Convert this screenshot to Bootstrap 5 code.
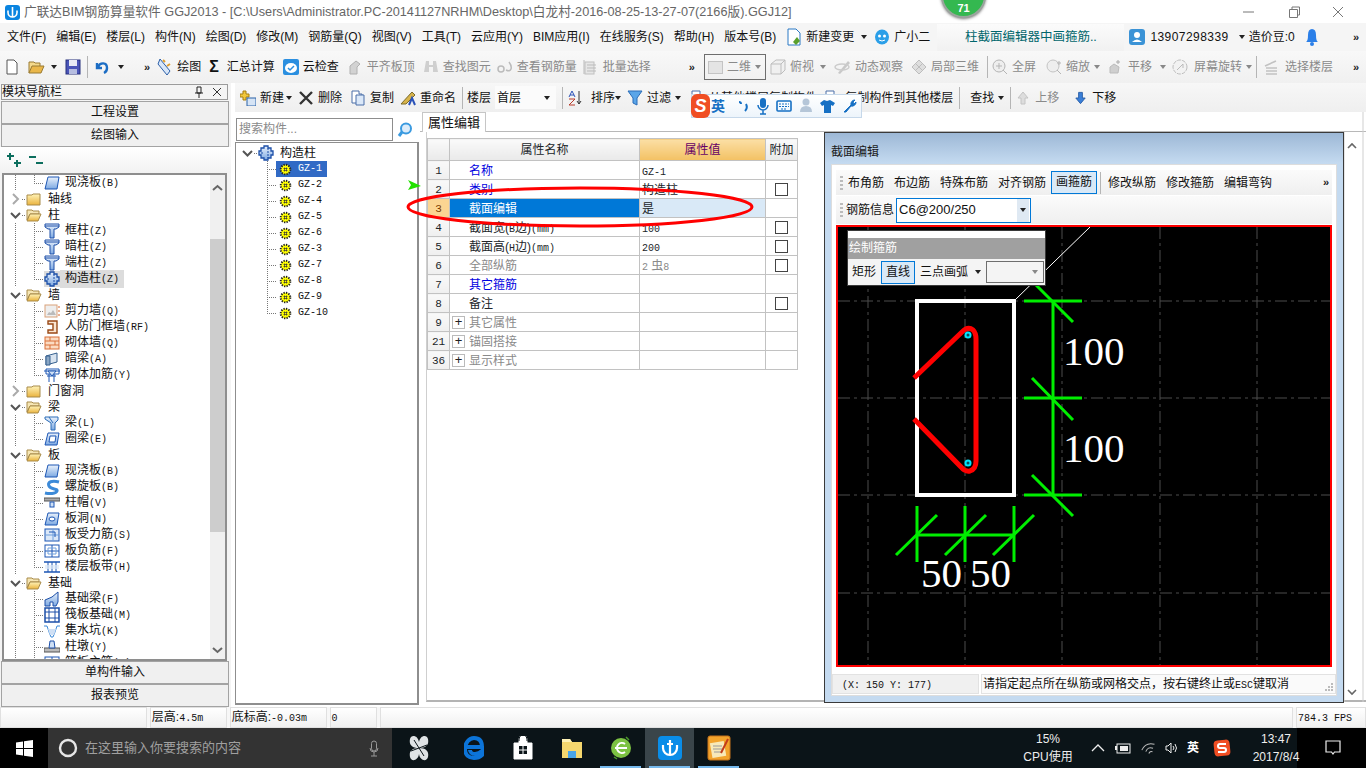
<!DOCTYPE html>
<html lang="zh-CN">
<head>
<meta charset="UTF-8">
<meta name="viewport" content="width=device-width, initial-scale=1.0">
<title>广联达BIM钢筋算量软件 GGJ2013</title>
<link href="https://cdn.jsdelivr.net/npm/bootstrap@5.3.2/dist/css/bootstrap.min.css" rel="stylesheet">
<style>
body{width:1366px;height:768px;overflow:hidden;background:#fff;color:#111;font:12px/16px "Liberation Sans","Noto Sans CJK SC",sans-serif}
svg{display:block;flex:none}
.app{width:1366px;height:768px}
.m{font:10px/16px "Liberation Mono","Noto Sans CJK SC",monospace}
.g2{margin-left:2px}.g6{margin-left:6px}.g7{margin-left:7px}.g10{margin-left:10px}.g14{margin-left:14px}.g20{margin-left:20px}.g38{margin-left:38px}
.gm2{margin-left:-2px}.gm3{margin-left:-3px}.gm5{margin-left:-5px}.gm6{margin-left:-6px}
/* title and menu */
.titlebar{height:23px;color:#666;padding-left:5px;font-size:12.7px}
.winbtns{margin-left:auto;gap:29px;padding-right:19px}
.menubar{height:28px;background:#f5f5f5;padding-left:7px;gap:10px;white-space:nowrap}
.helptab{width:187px;height:27px;background:linear-gradient(#fbfbfb,#f1f1f1);color:#00666c;justify-content:center;font-size:12.5px}
.phone{letter-spacing:.45px}
.chev2{font:bold 11px/11px "Liberation Sans",sans-serif;letter-spacing:-1px;color:#222}
/* toolbars */
.tools{height:32px;background:linear-gradient(#f8f8f8,#f0f0f0);padding-left:4px;white-space:nowrap}
.tools3{height:29px;background:linear-gradient(#f7f7f7,#efefef);padding-left:5px;white-space:nowrap}
.ti{display:flex;align-items:center;gap:4px}
.off{color:#8a8a8a}
.sep{width:1px;height:22px;background:#b5b5b5}
.caret{width:0;height:0;border:3px solid transparent;border-top:4px solid #222;border-bottom:0}
.caret.dim{border-top-color:#888}
.combo2d{width:62px;height:26px;border:1px solid #6e6e6e;padding-left:3px;margin-left:10px;color:#8a8a8a}
.combo2d i{width:15px;height:13px;background:#e4e4e4;border:1px solid #c4c4c4}
.floorsel{width:61px;height:23px;background:#fbfbfb;padding:0 2px}
/* left panel */
.nav-pane{width:231px;background:#f4f4f4}
.panehead{height:16px;margin:1px 3px 1px 1px;border:1px solid #9b9b9b;line-height:14px;padding-right:5px}
.navbtn{height:23px;width:228px;margin-left:1px;padding:0;border:1px solid #a3a3a3;border-radius:0;background:#f0f0f0;font-size:12px;line-height:21px;color:#111}
.expbar{height:26px;padding-left:6px;gap:6px;background:linear-gradient(#fff,#f2f2f2)}
.treebox{height:488px;width:225px;margin-left:2px;border:2px solid #8e8e8e;background:#fff;overflow:hidden}
.treeflow{width:206px}
.scrolltrack{width:15px;background:#f0f0f0}
.scrollthumb{height:293px;margin-top:64px;background:#cdcdcd}
.tr{height:16px;display:flex;align-items:center;white-space:nowrap}
.tw{width:13px;padding-right:4px;box-sizing:content-box;margin-left:5px;background:repeating-linear-gradient(to right,#777 0 1px,transparent 1px 2px) right 50%/4px 1px no-repeat}
.tg{width:4px;height:16px;background:repeating-linear-gradient(to right,#777 0 1px,transparent 1px 2px) 0 50%/100% 1px no-repeat}
.tl{width:10px;height:16px;margin-left:18px;background:repeating-linear-gradient(to bottom,#777 0 1px,transparent 1px 2px) 0 0/1px 100% no-repeat,repeating-linear-gradient(to right,#777 0 1px,transparent 1px 2px) 0 50%/100% 1px no-repeat}
.tl.end{background:repeating-linear-gradient(to bottom,#777 0 1px,transparent 1px 2px) 0 0/1px 50% no-repeat,repeating-linear-gradient(to right,#777 0 1px,transparent 1px 2px) 0 50%/100% 1px no-repeat}
.tv{width:1px;height:16px;margin-left:11px;background:repeating-linear-gradient(to bottom,#777 0 1px,transparent 1px 2px)}
.tlab{padding:0 3px;margin-left:2px}
.tbg{background:#dcdcdc}
.tlab-on{background:#dcdcdc;margin-left:0;padding-left:5px;padding-right:5px}
.tlab-g{margin-left:6px}
/* component tree */
.comp-col{width:184px}
.searchrow{height:30px;padding:6px 0 0 1px}
.searchbox{width:157px;height:23px;border:1px solid #8d8d8d;color:#8a8a8a;padding-left:2px;line-height:20px;font-size:12px}
.comptree{height:563px;border:1px solid #8e8e8e;border-width:1px 2px 2px 1px;background:#fff;padding:2px 0 0 5px}
.gzrow{height:16px;display:flex;align-items:center}
.gzline{width:9px;height:16px;margin-left:26px;background:repeating-linear-gradient(to bottom,#777 0 1px,transparent 1px 2px) 0 0/1px 100% no-repeat,repeating-linear-gradient(to right,#777 0 1px,transparent 1px 2px) 0 50%/100% 1px no-repeat}
.gzline.end{background:repeating-linear-gradient(to bottom,#777 0 1px,transparent 1px 2px) 0 0/1px 50% no-repeat,repeating-linear-gradient(to right,#777 0 1px,transparent 1px 2px) 0 50%/100% 1px no-repeat}
.gzitem{width:auto;display:flex;align-items:center;gap:6px;padding:0 4px 0 3px;height:16px}
.gzon{background:#316ac5;color:#fff;width:51px}
/* property pane */
.prop-pane{height:590px;margin-left:1px}
.tabstrip{height:20px;padding-left:2px;border-bottom:1px solid #b8b8b8}
.proptab{width:64px;height:20px;background:#fff;border:1px solid #c6c6c6;border-bottom:0;text-align:center;line-height:19px;font-size:13px}
.propbody{padding:6px 0 0 0;border-left:1px solid #cfcfcf;margin-left:6px;height:570px;border-bottom:2px solid #b4b4b4}
.ptable{width:371px;table-layout:fixed;border-collapse:collapse;margin:0;font-size:12px;--bs-table-border-color:#c2c2c2}
.ptable td,.ptable th{height:19px;padding:0;line-height:16px;font-weight:400;border:1px solid #c2c2c2;white-space:nowrap;overflow:hidden;vertical-align:middle}
.ptable td{padding-top:1px}
.ptable .m{line-height:10px}
.ptable th{height:22px;text-align:center;background:linear-gradient(#fafafa,#e9e9e9)}
.ptable th.valh{background:linear-gradient(#fbdfa5,#f3c163);color:#660066}
.c1{width:22px}.c2{width:190px}.c3{width:126px}.c4{width:32px}
.idx{text-align:center;background:linear-gradient(#f9f9f9,#efefef);font-family:"Liberation Mono",monospace;font-size:11px}
.lab{padding-left:19px!important}
.val{padding-left:2px!important}
.blue{color:#0000e0}
.gray{color:#8a8a8a}
.rowsel .idx{background:#fbd592;color:#7a3b00}
.rowsel .lab{background:#0078d7;color:#fff}
.rowsel .val{background:#d9e9f7}
.chk{width:13px;height:13px;border:1px solid #444;margin:0 auto;background:#fff}
.plus{width:13px;height:13px;border:1px solid #bbb;margin:0 4px 0 2px;line-height:10px;text-align:center;color:#222;font-size:13px}
.pluscell{display:flex;align-items:center;color:#8a8a8a}
/* section dialog */
.dlg{position:absolute;left:824px;top:132px;width:520px;height:571px;border:1px solid #3a3a3a;background:linear-gradient(#9db8d6,#c4daf0 30px,#c4daf0);padding:0 6px 6px}
.dlgtitle{height:31px;padding-top:11px;color:#1a1a1a}
.dlginner{height:532px;background:#fff;border:1px solid #ddd;padding:5px 4px 0 4px}
.dtool{height:25px;background:linear-gradient(#fbfbfb,#efefef);gap:10px;padding-left:1px;white-space:nowrap}
.grip{width:3px;height:14px;margin-left:3px;background:repeating-linear-gradient(to bottom,#bbb 0 2px,transparent 2px 4px)}
.dtool-on{height:23px;width:46px;border:1px solid #0078d7;background:#d9e9f7;text-align:center;line-height:21px;margin:0 -5px}
.dtool2{height:28px;background:linear-gradient(#fbfbfb,#efefef);margin-top:1px;padding-left:1px;gap:1px}
.rebcombo{width:135px;height:25px;border:1px solid #0078d7;background:#fff;padding-left:2px;font-size:13px;margin-left:1px}
.rebcombo b{width:12px;height:23px;margin-left:auto;background:#dfe9f3;margin-right:1px;display:flex;align-items:center;justify-content:center}
.canvasbox{position:relative;width:496px;height:442px;margin-top:1px;border:2px solid #f00;background:#000;overflow:hidden}
.floatbar{position:absolute;left:9px;top:3px;width:199px;height:56px;border:1px solid #3a3a3a;background:#f4f4f4}
.floatbar .ttl{height:7px;background:#fff}
.floatbar .hd{height:21px;background:#a0a0a0;color:#fff;line-height:20px;padding-left:1px}
.fltools{height:26px;padding-left:4px;white-space:nowrap}
.line-on{width:34px;height:23px;border:1px solid #0078d7;background:#d9e9f7;text-align:center;line-height:21px;margin:0 5px}
.flcombo{width:58px;height:22px;flex:none;border:1px solid #6e6e6e;margin-left:5px;padding-right:5px;justify-content:flex-end}
.dlgstatus{height:20px;margin:7px -4px 0 -4px;gap:2px;position:relative}
.stcell{background:#f0f0f0;border:1px solid #e2e2e2;height:20px;line-height:18px}
.stpos{width:147px;padding-left:9px}
.stmsg{width:355px;padding-left:1px;background:#fafafa}
.sizegrip{position:absolute;right:2px;bottom:2px}
/* status and taskbar */
.statusbar{height:21px;background:#f7f7f7;gap:3px}
.stc{height:21px;border:1px solid #e0e0e0;background:linear-gradient(#fff,#f0f0f0);line-height:19px;padding-left:1px}
.s1{width:147px}.s2{width:77px}.s3{width:97px}.s4{width:48px}.s5{width:914px}.s6{width:70px}
.taskbar{height:40px;background:#0b1418;color:#fff}
.startbtn{width:48px;height:40px;background:#000;justify-content:center}
.tasksearch{width:344px;height:40px;background:#333;padding-left:10px;color:#a0a0a0;gap:7px;font-size:13px}
.tasksearch svg:last-child{margin-left:auto;margin-right:13px}
.tapp{width:49px;height:40px;justify-content:center;position:relative}
.tapp-on{background:#3a454a}
.tapp-run::after{content:"";position:absolute;left:4px;right:4px;bottom:0;height:2px;background:#76b9ed}
.tray{margin-left:auto;font-size:12px}
.cpu{width:70px;text-align:center;line-height:18px;color:#eee}
.clock{width:52px;text-align:center;line-height:18px;color:#eee;margin:0 -5px 0 19px;white-space:nowrap;position:relative;z-index:1}
.notif{width:69px;height:40px;padding-left:3px;justify-content:center;background:#000}
/* overlays */
.badge71{position:absolute;left:941px;top:-27px;width:45px;height:45px;border-radius:50%;background:#34b850;border:2px solid #9aa49d;box-shadow:0 1px 3px #777;color:#fff;font-weight:700;font-size:11px;text-align:center;padding-top:26px;line-height:14px}
.imebar{position:absolute;left:691px;top:94px;width:171px;height:24px;background:linear-gradient(#fff,#edf4fb);border:1px solid #c6d8ea;gap:7px}
.imebar .yi{color:#1670c4;font-weight:700;font-size:14px;margin:0 6px 0 -6px}
.sgbadge{width:19px;height:24px;margin-left:-1px;background:#f04e23;border-radius:6px;color:#fff;font:italic 700 18px/24px "Liberation Sans",sans-serif;text-align:center}
.ellipse{position:absolute;left:404px;top:178px}
</style>
</head>
<body>
<svg width="0" height="0" class="position-absolute">
<defs>
<linearGradient id="bl" x1="0" y1="0" x2="0" y2="1"><stop offset="0" stop-color="#eaf2fc"/><stop offset="1" stop-color="#7da9e2"/></linearGradient>
<linearGradient id="yl" x1="0" y1="0" x2="0" y2="1"><stop offset="0" stop-color="#fff3b8"/><stop offset="1" stop-color="#eab33e"/></linearGradient>
<symbol id="slab" viewBox="0 0 16 16"><path d="M4 2h11l-2 12H1z" fill="url(#bl)" stroke="#1c56b4"/></symbol>
<symbol id="col" viewBox="0 0 16 16"><path d="M1 1h14v3l-3 2h-2v9H6V6H4L1 4z" fill="url(#bl)" stroke="#1c4fa8"/><path d="M1 3h14" stroke="#1c4fa8"/></symbol>
<symbol id="puz" viewBox="0 0 16 16"><path d="M6 1h4v2h3v3h2v4h-2v3h-3v2H6v-2H3v-3H1V6h2V3h3z" fill="url(#bl)" stroke="#1c4fa8" stroke-width="1.300"/><path d="M10 3v10M3 8h3" stroke="#1c4fa8" stroke-dasharray="2 1"/></symbol>
<symbol id="fc" viewBox="0 0 16 16"><path d="M1 4h5l1-1h7v11H1z" fill="url(#yl)" stroke="#a88b4a"/></symbol>
<symbol id="fo" viewBox="0 0 16 16"><path d="M1 3h5l1 1h6v3H4L1 13z" fill="#f6e6b4" stroke="#a88b4a"/><path d="M4 7h11l-3 7H1z" fill="url(#yl)" stroke="#a88b4a"/></symbol>
<symbol id="shear" viewBox="0 0 16 16"><rect x="1" y="2" width="12" height="12" fill="#eee" stroke="#d9a27a"/><path d="M3 12l2-3 2 1 2-3 3 5z" fill="#bbb"/><path d="M14 4h2M14 8h2M14 12h2" stroke="#d5622a"/></symbol>
<symbol id="rf" viewBox="0 0 16 16"><path d="M4 2h9v12H4v-3h5V5H4z" fill="#fbe7d3" stroke="#9a4a18" stroke-width="1.400"/></symbol>
<symbol id="brick" viewBox="0 0 16 16"><rect x="1" y="2" width="14" height="12" fill="#fbdcc3" stroke="#d9713a"/><path d="M1 6h14M1 10h14M6 2v4M11 6v4M6 10v4" stroke="#d9713a"/></symbol>
<symbol id="abeam" viewBox="0 0 16 16"><path d="M2 5l11-3v9L2 14z" fill="#d9e4f0" stroke="#36608f"/><path d="M2 5h4v9H2z" fill="#8aa6c4" stroke="#36608f"/></symbol>
<symbol id="mas" viewBox="0 0 16 16"><path d="M2 2h13v5H2zM5 7v8M10 7v8M0 4h16M3 9h9" fill="none" stroke="#1c56b4"/><path d="M4 4h8l-4 5z" fill="#cfe0f5" stroke="#1c56b4"/></symbol>
<symbol id="beam" viewBox="0 0 16 16"><path d="M1 2h13v3l-3 3v7H7V8L1 4z" fill="url(#bl)" stroke="#2b6cb8"/><path d="M5 2l4 6" stroke="#2b6cb8"/></symbol>
<symbol id="ring" viewBox="0 0 16 16"><path d="M4 2h11l-2 12H1z" fill="url(#bl)" stroke="#1c56b4"/><path d="M6 5h6l-1 6H5z" fill="#fff" stroke="#1c56b4"/></symbol>
<symbol id="spiral" viewBox="0 0 16 16"><path d="M15 3C8 1 3 3 5 7s9 2 8 5-8 3-12 2" fill="none" stroke="#3c8ad8" stroke-width="3"/></symbol>
<symbol id="cap" viewBox="0 0 16 16"><rect x="0" y="3" width="16" height="3" fill="#aaa" stroke="#555"/><rect x="6" y="7" width="4" height="5" fill="#cfe0f5" stroke="#1c56b4"/></symbol>
<symbol id="hole" viewBox="0 0 16 16"><path d="M4 2h11l-2 12H1z" fill="url(#bl)" stroke="#1c56b4"/><ellipse cx="8" cy="8" rx="3" ry="2" fill="#fff" stroke="#1c56b4"/></symbol>
<symbol id="rbar" viewBox="0 0 16 16"><rect x="1" y="2" width="14" height="12" fill="#dbe8f8" stroke="#1c56b4"/><path d="M1 8h14M9 2v12" stroke="#6f9fdc"/><path d="M5 5h6v5" fill="none" stroke="#1c56b4"/></symbol>
<symbol id="nbar" viewBox="0 0 16 16"><rect x="1" y="2" width="14" height="12" fill="#fff" stroke="#1c56b4"/><path d="M1 8h14M8 2v12" stroke="#1c56b4"/><path d="M4 5h8v6H4z" fill="none" stroke="#6f9fdc"/></symbol>
<symbol id="strip" viewBox="0 0 16 16"><path d="M0 3h16M0 13h16" stroke="#1c56b4" stroke-width="1.500"/><path d="M4 3v10M8 3v10M12 3v10" stroke="#1c56b4"/><rect x="1" y="6" width="14" height="4" fill="#dbe8f8" opacity=".7"/></symbol>
<symbol id="fbeam" viewBox="0 0 16 16"><path d="M1 15V9l7-3 6-5v10l-2 4H9v-4H6v4z" fill="url(#bl)" stroke="#1c4fa8"/></symbol>
<symbol id="raft" viewBox="0 0 16 16"><rect x="1" y="1" width="14" height="14" fill="#fff" stroke="#1c4fa8" stroke-width="1.500"/><path d="M5 1v14M11 1v14M1 5h14M1 11h14" stroke="#1c4fa8"/></symbol>
<symbol id="pit" viewBox="0 0 16 16"><path d="M0 3h3l2 6h6l2-6h3M5 9l2 5h2l2-5" fill="none" stroke="#3c8ad8"/><path d="M4 6h8l-2 6H6z" fill="#cfe0f5"/></symbol>
<symbol id="pier" viewBox="0 0 16 16"><rect x="0" y="9" width="16" height="4" fill="#bbb" stroke="#555"/><path d="M6 2h4l1 7H5z" fill="#cfe0f5" stroke="#1c4fa8"/></symbol>
<symbol id="gear" viewBox="0 0 13 13"><circle cx="6.500" cy="6.500" r="4.800" fill="#ff0" stroke="#222" stroke-width="2" stroke-dasharray="1.300 1.200"/><path d="M4.500 5.500h4M4.500 7.500h4M5.500 4.500v4M7.500 4.500v4" stroke="#333" stroke-width=".7"/></symbol>
<symbol id="down" viewBox="0 0 13 16"><path d="M2 6l4.500 4.500L11 6" fill="none" stroke="#555" stroke-width="2"/></symbol>
<symbol id="right" viewBox="0 0 13 16"><path d="M4 3l5 5-5 5" fill="none" stroke="#aaa" stroke-width="2"/></symbol>
</defs>
</svg>

<div class="app position-relative d-flex flex-column">
  <!-- 标题栏 -->
  <div class="titlebar d-flex align-items-center">
    <svg width="15" height="16" viewBox="0 0 15 16"><rect x="0" y="1" width="15" height="15" rx="3" fill="#0a84e0"/><path d="M7.500 3v10M3 6.500v2a3 3 0 0 0 9 0v-2" fill="none" stroke="#fff" stroke-width="1.600"/></svg>
    <span class="ms-1">广联达BIM钢筋算量软件 GGJ2013 - [C:\Users\Administrator.PC-20141127NRHM\Desktop\白龙村-2016-08-25-13-27-07(2166版).GGJ12]</span>
    <div class="winbtns d-flex align-items-center">
      <svg width="16" height="12" viewBox="0 0 16 12"><path d="M2 6h11" stroke="#777"/></svg>
      <svg width="16" height="12" viewBox="0 0 16 12"><path d="M3.500 3.500h8v8h-8zM6 3V1h7.500v8H12" fill="none" stroke="#777"/></svg>
      <svg width="16" height="12" viewBox="0 0 16 12"><path d="M2 1l10 10M12 1L2 11" stroke="#777"/></svg>
    </div>
  </div>
  <!-- 菜单栏 -->
  <div class="menubar d-flex align-items-center">
    <span>文件(F)</span><span>编辑(E)</span><span>楼层(L)</span><span>构件(N)</span><span>绘图(D)</span><span>修改(M)</span><span>钢筋量(Q)</span><span>视图(V)</span><span>工具(T)</span><span>云应用(Y)</span><span>BIM应用(I)</span><span>在线服务(S)</span><span>帮助(H)</span><span>版本号(B)</span>
    <span class="ti"><svg width="16" height="18" viewBox="0 0 16 18"><path d="M2 1h8l4 4v12H2z" fill="#fff" stroke="#2b78c4"/><path d="M7 14l4-5 3 4-4 4z" fill="#5aa02c"/></svg>新建变更</span><span class="caret gm3"></span>
    <span class="ti gm3"><svg width="16" height="16" viewBox="0 0 16 16"><ellipse cx="8" cy="8" rx="7" ry="7.500" fill="#2b9fe8"/><circle cx="5.500" cy="7" r="1.500" fill="#fff"/><circle cx="10.500" cy="7" r="1.500" fill="#fff"/><path d="M5 11q3 2 6 0" stroke="#fff" fill="none"/></svg>广小二</span>
    <div class="helptab d-flex align-items-center gm3">柱截面编辑器中画箍筋..</div>
    <span class="ti gm6"><svg width="18" height="18" viewBox="0 0 18 18"><rect x="1" y="1" width="16" height="16" rx="3" fill="#3b93d6"/><circle cx="9" cy="7" r="3" fill="#fff"/><path d="M4 14q5-5 10 0z" fill="#fff"/></svg><span class="phone">13907298339</span></span><span class="caret"></span>
    <span class="gm6">造价豆:0</span>
    <svg width="14" height="18" viewBox="0 0 14 18"><path d="M7 1q4 0 4 6t2 7H1q2-1 2-7t4-6z" fill="#2b7fe8"/><circle cx="7" cy="16" r="2" fill="#2b7fe8"/></svg>
    <span class="chev2 ms-auto pe-2">»</span>
  </div>
  <!-- 工具栏 -->
  <div class="tools d-flex align-items-center">
    <svg width="16" height="16" viewBox="0 0 16 16"><path d="M3 1h7l3 3v11H3z" fill="#fff" stroke="#555"/></svg>
    <svg class="ms-2" width="17" height="16" viewBox="0 0 17 16"><path d="M1 14V3h5l1 1h5v3" fill="#f4d98c" stroke="#997a33"/><path d="M1 14l3-7h12l-3 7z" fill="#eab74a" stroke="#997a33"/></svg>
    <span class="caret g6"></span>
    <svg class="ms-2" width="16" height="16" viewBox="0 0 16 16"><rect x="1" y="1" width="14" height="14" fill="#4a55b8" stroke="#26307c"/><rect x="4" y="1" width="8" height="6" fill="#e8ebf5"/><rect x="4" y="10" width="8" height="5" fill="#b6bde0"/></svg>
    <span class="sep g6"></span>
    <svg class="g6" width="16" height="16" viewBox="0 0 16 16"><path d="M3 4v5h5M4 8c2-5 9-5 9 1 0 2-1 4-3 5" fill="none" stroke="#1c6dc4" stroke-width="2.400"/></svg>
    <span class="caret ms-2"></span>
    <span class="chev2 g20">»</span>
    <span class="ti ms-2"><svg width="16" height="18" viewBox="0 0 16 18"><path d="M3 1l10 12-3 4L1 6z" fill="#d8e6f8" stroke="#2b5fa8"/><path d="M6 2l2 2M10 8l3-2" stroke="#e0a030" stroke-width="2"/></svg>绘图</span>
    <span class="ti ms-1"><span class="fw-bold text-center fs-6 px-1">Σ</span><span>汇总计算</span></span>
    <span class="ti ms-2"><svg width="16" height="16" viewBox="0 0 16 16"><rect width="16" height="16" rx="2" fill="#2b8fe0"/><ellipse cx="8" cy="9" rx="6" ry="5" fill="#fff"/><path d="M5 9l2 2 4-4" stroke="#2b8fe0" fill="none" stroke-width="1.500"/></svg>云检查</span>
    <span class="ti off ms-2"><svg width="16" height="16" viewBox="0 0 16 16"><path d="M3 15V7l6-5 4 3-3 3v7z" fill="#d2d2d2" stroke="#b0b0b0"/></svg>平齐板顶</span>
    <span class="ti off ms-2"><svg width="16" height="16" viewBox="0 0 16 16"><path d="M3 2h3v4h4V2h3l2 11h-5V8H6v5H1z" fill="#cfcfcf"/></svg>查找图元</span>
    <span class="ti off g6"><svg width="16" height="16" viewBox="0 0 16 16"><circle cx="4" cy="10" r="3" fill="none" stroke="#bbb" stroke-width="1.500"/><path d="M9 11q4 2 5-1t-2-7" fill="none" stroke="#bbb" stroke-width="1.500"/></svg><span>查看钢筋量</span></span>
    <span class="ti off g6"><svg width="16" height="16" viewBox="0 0 16 16"><rect x="2" y="3" width="9" height="12" fill="#e6e6e6" stroke="#c0c0c0"/><path d="M4 6h9M4 9h9M4 12h9M1 1v14" stroke="#bbb"/></svg><span>批量选择</span></span>
    <span class="chev2 g38">»</span>
    <div class="combo2d d-flex align-items-center gap-1"><i></i>二维<span class="caret dim ms-auto me-1"></span></div>
    <span class="ti off ms-1"><svg width="16" height="16" viewBox="0 0 16 16"><path d="M1 5l5-4h9v10l-4 4H1zM1 5h10v10M11 5l4-4" fill="#f0f0f0" stroke="#bdbdbd"/></svg>俯视</span><span class="caret dim g6"></span>
    <span class="ti off ms-2"><svg width="17" height="16" viewBox="0 0 17 16"><path d="M4 14L14 2l2 2L6 15z" fill="#c8c8c8"/><ellipse cx="8" cy="8" rx="7" ry="3" fill="none" stroke="#ccc" stroke-width="1.500"/></svg>动态观察</span>
    <span class="ti off ms-2"><svg width="16" height="16" viewBox="0 0 16 16"><path d="M8 1l7 7-7 7-7-7z" fill="#dedede" stroke="#bdbdbd"/><path d="M4 4l8 8M12 4l-8 8" stroke="#bdbdbd"/></svg>局部三维</span>
    <span class="sep ms-2"></span>
    <span class="ti off ms-1"><svg width="16" height="16" viewBox="0 0 16 16"><circle cx="7" cy="7" r="6" fill="#eee" stroke="#b5b5b5"/><path d="M4 7h6M7 4v6M11 11l4 4" stroke="#b5b5b5"/></svg>全屏</span>
    <span class="ti off g10"><svg width="16" height="16" viewBox="0 0 16 16"><circle cx="7" cy="7" r="6" fill="#eee" stroke="#c4c4c4"/><path d="M11 11l4 4M13 2v4M11 4h4" stroke="#b5b5b5"/></svg>缩放</span><span class="caret dim ms-1"></span>
    <span class="ti off g6"><svg width="16" height="16" viewBox="0 0 16 16"><path d="M4 14V8l4-3 5 3-1 6z" fill="#cfcfcf" stroke="#bbb"/><path d="M12 1v4M10 3h4" stroke="#aaa"/></svg><span class="g2">平移</span></span><span class="caret dim ms-2"></span>
    <span class="ti off g6"><svg width="16" height="16" viewBox="0 0 16 16"><circle cx="8" cy="8" r="7" fill="#f2f2f2" stroke="#bdbdbd" stroke-dasharray="4 1"/><path d="M5 11l6-6v4" fill="none" stroke="#bbb"/></svg><span class="g2">屏幕旋转</span></span><span class="caret dim ms-1"></span>
    <span class="sep ms-1"></span>
    <span class="ti off g6"><svg width="16" height="16" viewBox="0 0 16 16"><path d="M2 7l11-5M3 9h11M3 12h11M3 15h11" stroke="#c2c2c2" stroke-width="1.600"/></svg><span class="g2">选择楼层</span></span>
    <span class="chev2 ms-auto pe-2">»</span>
  </div>

  <div class="d-flex">
    <!-- 模块导航栏 -->
    <div class="nav-pane flex-none">
      <div class="panehead d-flex align-items-center">模块导航栏
        <svg class="ms-auto" width="10" height="12" viewBox="0 0 10 12"><path d="M3 1h4v6H3zM1 7h8M5 7v5" fill="none" stroke="#222"/></svg>
        <svg class="ms-2" width="10" height="10" viewBox="0 0 10 10"><path d="M1 1l8 8M9 1L1 9" stroke="#333"/></svg>
      </div>
      <button class="btn navbtn d-block">工程设置</button>
      <button class="btn navbtn d-block">绘图输入</button>
      <div class="expbar d-flex align-items-center">
        <svg width="16" height="16" viewBox="0 0 16 16"><path d="M4 1v7M1 4h7M11 8v7M8 11h7" stroke="#0c6e5e" stroke-width="2"/></svg>
        <svg width="16" height="16" viewBox="0 0 16 16"><path d="M1 5h7M8 11h7" stroke="#0c6e5e" stroke-width="2"/></svg>
      </div>
      <div class="treebox d-flex">
        <div class="treeflow">
          <div class="tr"><span class="tv"></span><span class="tl end"></span><svg width="16" height="16"><use href="#slab"/></svg><span class="tlab">现浇板<span class="m">(B)</span></span></div>
          <div class="tr"><svg class="tw" width="13" height="16"><use href="#right"/></svg><svg width="16" height="16"><use href="#fc"/></svg><span class="tlab-g">轴线</span></div>
          <div class="tr"><svg class="tw" width="13" height="16"><use href="#down"/></svg><svg width="16" height="16"><use href="#fo"/></svg><span class="tlab-g">柱</span></div>
          <div class="tr"><span class="tv"></span><span class="tl"></span><svg width="16" height="16"><use href="#col"/></svg><span class="tlab">框柱<span class="m">(Z)</span></span></div>
          <div class="tr"><span class="tv"></span><span class="tl"></span><svg width="16" height="16"><use href="#col"/></svg><span class="tlab">暗柱<span class="m">(Z)</span></span></div>
          <div class="tr"><span class="tv"></span><span class="tl"></span><svg width="16" height="16"><use href="#col"/></svg><span class="tlab">端柱<span class="m">(Z)</span></span></div>
          <div class="tr"><span class="tv"></span><span class="tl end"></span><svg class="tbg" width="16" height="16"><use href="#puz"/></svg><span class="tlab tlab-on">构造柱<span class="m">(Z)</span></span></div>
          <div class="tr"><svg class="tw" width="13" height="16"><use href="#down"/></svg><svg width="16" height="16"><use href="#fo"/></svg><span class="tlab-g">墙</span></div>
          <div class="tr"><span class="tv"></span><span class="tl"></span><svg width="16" height="16"><use href="#shear"/></svg><span class="tlab">剪力墙<span class="m">(Q)</span></span></div>
          <div class="tr"><span class="tv"></span><span class="tl"></span><svg width="16" height="16"><use href="#rf"/></svg><span class="tlab">人防门框墙<span class="m">(RF)</span></span></div>
          <div class="tr"><span class="tv"></span><span class="tl"></span><svg width="16" height="16"><use href="#brick"/></svg><span class="tlab">砌体墙<span class="m">(Q)</span></span></div>
          <div class="tr"><span class="tv"></span><span class="tl"></span><svg width="16" height="16"><use href="#abeam"/></svg><span class="tlab">暗梁<span class="m">(A)</span></span></div>
          <div class="tr"><span class="tv"></span><span class="tl end"></span><svg width="16" height="16"><use href="#mas"/></svg><span class="tlab">砌体加筋<span class="m">(Y)</span></span></div>
          <div class="tr"><svg class="tw" width="13" height="16"><use href="#right"/></svg><svg width="16" height="16"><use href="#fc"/></svg><span class="tlab-g">门窗洞</span></div>
          <div class="tr"><svg class="tw" width="13" height="16"><use href="#down"/></svg><svg width="16" height="16"><use href="#fo"/></svg><span class="tlab-g">梁</span></div>
          <div class="tr"><span class="tv"></span><span class="tl"></span><svg width="16" height="16"><use href="#beam"/></svg><span class="tlab">梁<span class="m">(L)</span></span></div>
          <div class="tr"><span class="tv"></span><span class="tl end"></span><svg width="16" height="16"><use href="#ring"/></svg><span class="tlab">圈梁<span class="m">(E)</span></span></div>
          <div class="tr"><svg class="tw" width="13" height="16"><use href="#down"/></svg><svg width="16" height="16"><use href="#fo"/></svg><span class="tlab-g">板</span></div>
          <div class="tr"><span class="tv"></span><span class="tl"></span><svg width="16" height="16"><use href="#slab"/></svg><span class="tlab">现浇板<span class="m">(B)</span></span></div>
          <div class="tr"><span class="tv"></span><span class="tl"></span><svg width="16" height="16"><use href="#spiral"/></svg><span class="tlab">螺旋板<span class="m">(B)</span></span></div>
          <div class="tr"><span class="tv"></span><span class="tl"></span><svg width="16" height="16"><use href="#cap"/></svg><span class="tlab">柱帽<span class="m">(V)</span></span></div>
          <div class="tr"><span class="tv"></span><span class="tl"></span><svg width="16" height="16"><use href="#hole"/></svg><span class="tlab">板洞<span class="m">(N)</span></span></div>
          <div class="tr"><span class="tv"></span><span class="tl"></span><svg width="16" height="16"><use href="#rbar"/></svg><span class="tlab">板受力筋<span class="m">(S)</span></span></div>
          <div class="tr"><span class="tv"></span><span class="tl"></span><svg width="16" height="16"><use href="#nbar"/></svg><span class="tlab">板负筋<span class="m">(F)</span></span></div>
          <div class="tr"><span class="tv"></span><span class="tl end"></span><svg width="16" height="16"><use href="#strip"/></svg><span class="tlab">楼层板带<span class="m">(H)</span></span></div>
          <div class="tr"><svg class="tw" width="13" height="16"><use href="#down"/></svg><svg width="16" height="16"><use href="#fo"/></svg><span class="tlab-g">基础</span></div>
          <div class="tr"><span class="tv"></span><span class="tl"></span><svg width="16" height="16"><use href="#fbeam"/></svg><span class="tlab">基础梁<span class="m">(F)</span></span></div>
          <div class="tr"><span class="tv"></span><span class="tl"></span><svg width="16" height="16"><use href="#raft"/></svg><span class="tlab">筏板基础<span class="m">(M)</span></span></div>
          <div class="tr"><span class="tv"></span><span class="tl"></span><svg width="16" height="16"><use href="#pit"/></svg><span class="tlab">集水坑<span class="m">(K)</span></span></div>
          <div class="tr"><span class="tv"></span><span class="tl"></span><svg width="16" height="16"><use href="#pier"/></svg><span class="tlab">柱墩<span class="m">(Y)</span></span></div>
          <div class="tr"><span class="tv"></span><span class="tl"></span><svg width="16" height="16"><use href="#nbar"/></svg><span class="tlab">筏板主筋<span class="m">(R)</span></span></div>
        </div>
        <div class="scrolltrack d-flex flex-column position-relative">
          <div class="scrollthumb"></div>
          <svg class="position-absolute top-0 mt-2" width="15" height="10" viewBox="0 0 15 10"><path d="M3 7l4.500-4L12 7" fill="none" stroke="#666" stroke-width="2"/></svg>
          <svg class="position-absolute bottom-0 mb-1" width="15" height="10" viewBox="0 0 15 10"><path d="M3 3l4.500 4L12 3" fill="none" stroke="#666" stroke-width="2"/></svg>
        </div>
      </div>
      <button class="btn navbtn d-block">单构件输入</button>
      <button class="btn navbtn d-block">报表预览</button>
    </div>

    <!-- 右侧 -->
    <div class="flex-fill ms-1">
      <div class="tools3 d-flex align-items-center">
        <span class="ti"><svg width="16" height="16" viewBox="0 0 16 16"><path d="M3 1h3v3h3v3H6v3H3V7H0V4h3z" fill="#f2c83c" stroke="#a67f10"/><rect x="7" y="8" width="9" height="8" fill="#d6e4f5" stroke="#2a62a8"/></svg>新建</span><span class="caret g2"></span>
        <span class="ti g6"><svg width="16" height="16" viewBox="0 0 16 16"><path d="M2 2l12 12M14 2L2 14" stroke="#333" stroke-width="2.400"/></svg>删除</span>
        <span class="ti ms-2"><svg width="16" height="16" viewBox="0 0 16 16"><path d="M2 1h7v3h3v9H2z" fill="#fff" stroke="#4a6fa8"/><path d="M6 5h8v10H6z" fill="#dbe8f8" stroke="#4a6fa8"/></svg>复制</span>
        <span class="ti g6"><svg width="16" height="16" viewBox="0 0 16 16"><path d="M1 14L12 2l3 3-9 9z" fill="#d8b44a" stroke="#7a6a2a"/><path d="M9 15l3-7 3 7" fill="none" stroke="#2a52b8" stroke-width="2"/></svg><span>重命名</span></span>
        <span class="sep g6"></span>
        <span class="ms-1">楼层</span>
        <div class="floorsel d-flex align-items-center ms-1">首层<span class="caret ms-auto me-1"></span></div>
        <span class="sep g6"></span>
        <span class="ti ms-1"><svg width="16" height="16" viewBox="0 0 16 16"><path d="M12 1v13M10 11l2 3 2-3" fill="none" stroke="#333"/><path d="M2 7l3-6 3 6M3 5h4" fill="none" stroke="#2a52b8"/><path d="M2 9h6l-6 6h6" fill="none" stroke="#b83a2a"/></svg><span class="ms-1">排序</span></span><span class="caret"></span>
        <span class="ti g6"><svg width="16" height="16" viewBox="0 0 16 16"><path d="M1 1h14L10 8v7l-4-2V8z" fill="#5aa5e8" stroke="#2a6cb8"/></svg>过滤</span><span class="caret ms-1"></span>
        <span class="ti ms-2"><svg width="16" height="16" viewBox="0 0 16 16"><path d="M3 1h8v12H3z" fill="#fff" stroke="#4a6fa8"/></svg>从其他楼层复制构件</span>
        <span class="ti g6"><svg width="16" height="16" viewBox="0 0 16 16"><path d="M3 1h8v12H3z" fill="#fff" stroke="#4a6fa8"/><path d="M9 10l5 3-5 3z" fill="#2a6cb8"/></svg><span class="g2">复制构件到其他楼层</span></span>
        <span class="sep g6"></span>
        <span class="g10">查找</span><span class="caret ms-1"></span>
        <span class="sep g6"></span>
        <span class="ti off ms-1"><svg width="16" height="16" viewBox="0 0 16 16"><path d="M8 2l5 6h-3v6H6V8H3z" fill="#ddd" stroke="#c4c4c4"/></svg>上移</span>
        <span class="ti g14"><svg width="15" height="16" viewBox="0 0 16 16"><path d="M8 14l5-6h-3V2H6v6H3z" fill="#3a7fd8" stroke="#2a5fa8"/></svg>下移</span>
      </div>
      <div class="d-flex">
        <div class="comp-col flex-none">
          <div class="searchrow d-flex">
            <div class="searchbox">搜索构件...</div>
            <svg class="ms-1 mt-1" width="16" height="16" viewBox="0 0 16 16"><circle cx="9" cy="6.500" r="5" fill="#dcecfa" stroke="#3a9ae0" stroke-width="2"/><path d="M5 10l-3 4" stroke="#3a9ae0" stroke-width="3"/></svg>
          </div>
          <div class="comptree">
            <div class="gzrow"><svg width="13" height="16"><use href="#down"/></svg><span class="tg"></span><svg width="16" height="16"><use href="#puz"/></svg><span class="g6">构造柱</span></div>
            <div class="gzrow"><span class="gzline"></span><span class="gzitem gzon"><svg width="13" height="13"><use href="#gear"/></svg><span class="m">GZ-1</span></span></div>
            <div class="gzrow"><span class="gzline"></span><span class="gzitem"><svg width="13" height="13"><use href="#gear"/></svg><span class="m">GZ-2</span></span></div>
            <div class="gzrow"><span class="gzline"></span><span class="gzitem"><svg width="13" height="13"><use href="#gear"/></svg><span class="m">GZ-4</span></span></div>
            <div class="gzrow"><span class="gzline"></span><span class="gzitem"><svg width="13" height="13"><use href="#gear"/></svg><span class="m">GZ-5</span></span></div>
            <div class="gzrow"><span class="gzline"></span><span class="gzitem"><svg width="13" height="13"><use href="#gear"/></svg><span class="m">GZ-6</span></span></div>
            <div class="gzrow"><span class="gzline"></span><span class="gzitem"><svg width="13" height="13"><use href="#gear"/></svg><span class="m">GZ-3</span></span></div>
            <div class="gzrow"><span class="gzline"></span><span class="gzitem"><svg width="13" height="13"><use href="#gear"/></svg><span class="m">GZ-7</span></span></div>
            <div class="gzrow"><span class="gzline"></span><span class="gzitem"><svg width="13" height="13"><use href="#gear"/></svg><span class="m">GZ-8</span></span></div>
            <div class="gzrow"><span class="gzline"></span><span class="gzitem"><svg width="13" height="13"><use href="#gear"/></svg><span class="m">GZ-9</span></span></div>
            <div class="gzrow"><span class="gzline end"></span><span class="gzitem"><svg width="13" height="13"><use href="#gear"/></svg><span class="m">GZ-10</span></span></div>
          </div>
        </div>
        <div class="prop-pane flex-fill">
          <div class="tabstrip d-flex"><div class="proptab">属性编辑</div></div>
          <div class="propbody">
            <table class="table ptable">
              <colgroup><col class="c1"><col class="c2"><col class="c3"><col class="c4"></colgroup>
              <tr><th></th><th>属性名称</th><th class="valh">属性值</th><th>附加</th></tr>
              <tr><td class="idx">1</td><td class="lab blue">名称</td><td class="val"><span class="m">GZ-1</span></td><td></td></tr>
              <tr><td class="idx">2</td><td class="lab blue">类别</td><td class="val">构造柱</td><td><div class="chk"></div></td></tr>
              <tr class="rowsel"><td class="idx">3</td><td class="lab">截面编辑</td><td class="val">是</td><td></td></tr>
              <tr><td class="idx">4</td><td class="lab">截面宽(<span class="m">B</span>边)<span class="m">(mm)</span></td><td class="val"><span class="m">100</span></td><td><div class="chk"></div></td></tr>
              <tr><td class="idx">5</td><td class="lab">截面高(<span class="m">H</span>边)<span class="m">(mm)</span></td><td class="val"><span class="m">200</span></td><td><div class="chk"></div></td></tr>
              <tr><td class="idx">6</td><td class="lab gray">全部纵筋</td><td class="val gray"><span class="m">2</span> 虫<span class="m">8</span></td><td><div class="chk"></div></td></tr>
              <tr><td class="idx">7</td><td class="lab blue">其它箍筋</td><td class="val"></td><td></td></tr>
              <tr><td class="idx">8</td><td class="lab">备注</td><td class="val"></td><td><div class="chk"></div></td></tr>
              <tr><td class="idx">9</td><td><div class="pluscell"><div class="plus">+</div>其它属性</div></td><td></td><td></td></tr>
              <tr><td class="idx">21</td><td><div class="pluscell"><div class="plus">+</div>锚固搭接</div></td><td></td><td></td></tr>
              <tr><td class="idx">36</td><td><div class="pluscell"><div class="plus">+</div>显示样式</div></td><td></td><td></td></tr>
            </table>
          </div>
        </div>
      </div>
    </div>
  </div>

  <!-- 状态栏 -->
  <div class="statusbar d-flex">
    <div class="stc s1"></div>
    <div class="stc s2">层高:<span class="m">4.5m</span></div>
    <div class="stc s3">底标高:<span class="m">-0.03m</span></div>
    <div class="stc s4"><span class="m">0</span></div>
    <div class="stc s5"></div>
    <div class="stc s6"><span class="m">784.3 FPS</span></div>
  </div>

  <!-- 任务栏 -->
  <div class="taskbar d-flex align-items-center">
    <div class="startbtn d-flex align-items-center">
      <svg width="17" height="17" viewBox="0 0 17 17"><path d="M0 2.500l7-1v6.500H0zM8 1.300L17 0v8H8zM0 9h7v6.500l-7-1zM8 9h9v8l-9-1.300z" fill="#fff"/></svg>
    </div>
    <div class="tasksearch d-flex align-items-center">
      <svg width="20" height="20" viewBox="0 0 20 20"><circle cx="10" cy="10" r="8" fill="none" stroke="#e6e6e6" stroke-width="2.400"/></svg>
      <span>在这里输入你要搜索的内容</span>
      <svg width="10" height="17" viewBox="0 0 10 17"><rect x="2.500" y="1" width="5" height="10" rx="2.500" fill="none" stroke="#999"/><path d="M1 8a4 4 0 0 0 8 0M5 12v4M2 16h6" fill="none" stroke="#999"/></svg>
    </div>
    <div class="tapp d-flex align-items-center g2"><svg width="22" height="26" viewBox="0 0 22 26"><path d="M11 13C3 13 1 9 2 4s8-4 9 3c1-7 8-8 9-3s-1 9-9 9c8 0 10 4 9 9s-8 4-9-3c-1 7-8 8-9 3s1-9 9-9z" fill="#dfe3e5"/><path d="M11 13L6 5M11 13l8-3M11 13l-8 3M11 13l5 8" stroke="#0b1418"/></svg></div>
    <div class="tapp d-flex align-items-center g6"><svg width="20" height="24" viewBox="0 0 20 24"><path d="M3 11h15c0-6-3-9-8-9S1 7 1 13s4 9 9 9c3 0 6-1 8-3v-4c-2 2-5 3-7 3-3 0-5-2-5-4" fill="none" stroke="#0c74d8" stroke-width="4"/></svg></div>
    <div class="tapp d-flex align-items-center"><svg width="20" height="24" viewBox="0 0 20 24"><path d="M1 7h18v16H1zM6 7V3a4 4 0 0 1 8 0v4" fill="#fff" stroke="#fff"/><path d="M6 5V3a4 4 0 0 1 8 0v2" fill="none" stroke="#0b1418"/><path d="M6 10h3.500v3.500H6zM10.500 10H14v3.500h-3.500zM6 14.500h3.500V18H6zM10.500 14.500H14V18h-3.500z" fill="#0b1418"/></svg></div>
    <div class="tapp d-flex align-items-center"><svg width="22" height="24" viewBox="0 0 22 24"><path d="M1 3h8l2 3h10v16H1z" fill="#f5d76e"/><path d="M1 3h8l2 3H1z" fill="#fff2b5"/><path d="M7 15h8v7H7z" fill="#4aa5e8"/></svg></div>
    <div class="tapp d-flex align-items-center tapp-run"><svg width="22" height="26" viewBox="0 0 22 26"><circle cx="11" cy="13" r="10" fill="#7cc242"/><path d="M5 13h12M15 9a5 5 0 1 0 0 8" stroke="#fff" fill="none" stroke-width="2"/><path d="M16 2l3 3M4 22l3 2" stroke="#4a9a2a" stroke-width="1.500"/></svg></div>
    <div class="tapp d-flex align-items-center tapp-on tapp-run"><svg width="24" height="24" viewBox="0 0 24 24"><rect width="24" height="24" rx="4" fill="#0a8de8"/><path d="M12 4v15M5 9v3a7 7 0 0 0 14 0V9M9 8h6" fill="none" stroke="#fff" stroke-width="2.200"/></svg></div>
    <div class="tapp d-flex align-items-center tapp-run"><svg width="24" height="26" viewBox="0 0 24 26"><rect x="1" y="1" width="22" height="24" rx="2" fill="#f2a32c" stroke="#c6731a"/><rect x="4" y="7" width="14" height="15" fill="#f8e9b8" transform="rotate(-10 11 14)"/><path d="M6 11h9M6 14h9M7 17h8" stroke="#999"/><path d="M14 18L21 4" stroke="#c33b1a" stroke-width="2"/></svg></div>
    <div class="tray d-flex align-items-center">
      <div class="cpu">15%<br>CPU使用</div>
      <svg class="ms-2" width="14" height="10" viewBox="0 0 14 10"><path d="M1 8l6-6 6 6" fill="none" stroke="#eee" stroke-width="1.300"/></svg>
      <svg class="g10" width="16" height="14" viewBox="0 0 16 14"><rect x="2" y="3" width="13" height="9" fill="none" stroke="#eee"/><rect x="5" y="5" width="8" height="5" fill="#eee"/><path d="M0 5h2v4H0z" fill="#eee"/></svg>
      <svg class="g10" width="16" height="14" viewBox="0 0 16 14"><path d="M1 6q7-6 14 0M4 9q4-4 8 0M6 12q2-2 4 0" fill="none" stroke="#bbb" transform="rotate(-25 8 8)"/></svg>
      <svg class="ms-2" width="14" height="14" viewBox="0 0 14 14"><path d="M1 5h2l3-3v10L3 9H1z" fill="none" stroke="#eee"/><path d="M8 5q2 2 0 4M10 3q3 4 0 8" fill="none" stroke="#eee"/></svg>
      <span class="ms-2 fw-bold">英</span>
      <svg class="g14" width="18" height="18" viewBox="0 0 18 18"><rect x="1" y="1" width="16" height="16" rx="4" fill="#f04e23" transform="rotate(-6 9 9)"/><path d="M13 5H7q-2 0-2 2t2 2h4q2 0 2 2t-2 2H5" fill="none" stroke="#fff" stroke-width="2"/></svg>
      <div class="clock">13:47<br>2017/8/4</div>
      <div class="notif d-flex align-items-center"><svg width="16" height="16" viewBox="0 0 16 16"><path d="M1 1h14v11H9.500L8 14l-1.500-2H1z" fill="none" stroke="#eee" stroke-width="1.200"/></svg></div>
    </div>
  </div>

  <!-- 截面编辑 窗口 -->
  <div class="dlg">
    <div class="dlgtitle">截面编辑</div>
    <div class="dlginner">
      <div class="dtool d-flex align-items-center">
        <span class="grip"></span><span class="gm5">布角筋</span><span>布边筋</span><span>特殊布筋</span><span>对齐钢筋</span><span class="dtool-on">画箍筋</span><span class="sep gm2"></span><span class="gm3">修改纵筋</span><span>修改箍筋</span><span>编辑弯钩</span>
        <span class="chev2 ms-auto pe-1">»</span>
      </div>
      <div class="dtool2 d-flex align-items-center">
        <span class="grip"></span><span class="g2">钢筋信息</span>
        <div class="rebcombo d-flex align-items-center">C6@200/250<b><span class="caret"></span></b></div>
      </div>
      <div class="canvasbox">
        <svg width="492" height="438" viewBox="838 228 492 438" font-family="Liberation Serif,serif" fill="#fff">
          <g stroke="#4d4d4d" stroke-dasharray="12 4 3 4" fill="none">
            <path d="M868 228v438M965 228v438M1062 228v438M1160 228v438M1257 228v438"/>
            <path d="M838 302h492M838 399h492M838 496h492M838 594h492"/>
          </g>
          <path d="M1016 300L1090 228" stroke="#fff" fill="none"/>
          <rect x="917" y="302" width="97" height="194" fill="none" stroke="#fff" stroke-width="4"/>
          <path d="M914 379L962 333Q968 327 973 331Q976 334 976 340V462Q976 470 970 472Q965 473 961 468L914 420" fill="none" stroke="#f00" stroke-width="5"/>
          <circle cx="968" cy="336" r="2.500" fill="#0a4a5a" stroke="#00e5ff" stroke-width="2"/>
          <circle cx="968" cy="464" r="2.500" fill="#0a4a5a" stroke="#00e5ff" stroke-width="2"/>
          <g stroke="#00ee00" stroke-width="3" fill="none">
            <path d="M1053 302V496M1024 302h58M1024 399h58M1024 496h58"/>
            <path d="M1033 283l40 40M1032 379l41 42M1032 476l41 41"/>
            <path d="M917 536h97M917 507v56M965 507v56M1014 507v56"/>
            <path d="M896 556l41-40M945 556l41-40M993 556l41-40"/>
          </g>
          <text x="1063" y="366" font-size="41">100</text>
          <text x="1063" y="463" font-size="41">100</text>
          <text x="921" y="588" font-size="41">50</text>
          <text x="970" y="588" font-size="41">50</text>
        </svg>
        <div class="floatbar">
          <div class="ttl"></div>
          <div class="hd">绘制箍筋</div>
          <div class="fltools d-flex align-items-center"><span>矩形</span><span class="line-on">直线</span><span>三点画弧</span><span class="caret g7"></span><div class="flcombo d-flex align-items-center"><span class="caret dim"></span></div></div>
        </div>
      </div>
      <div class="dlgstatus d-flex">
        <div class="stcell stpos"><span class="m">(X: 150 Y: 177)</span></div>
        <div class="stcell stmsg">请指定起点所在纵筋或网格交点，按右键终止或<span class="m">ESC</span>键取消</div>
        <svg class="sizegrip" width="10" height="10" viewBox="0 0 10 10"><path d="M7 1h2v2H7zM4 4h2v2H4zM7 4h2v2H7zM1 7h2v2H1zM4 7h2v2H4zM7 7h2v2H7z" fill="#bbb"/></svg>
      </div>
    </div>
  </div>

  <!-- 右侧滚动箭头 -->
  <svg class="position-absolute top-0 end-0" width="22" height="710" viewBox="0 0 22 710">
    <path d="M0 132V702" stroke="#ccc"/>
    <path d="M4 148l4-4 4 4M4 690l4 4 4-4" fill="none" stroke="#666" stroke-width="1.600"/>
    <path d="M19 112V702" stroke="#cfcfcf"/>
  </svg>

  <!-- 悬浮球 -->
  <div class="badge71">71</div>

  <!-- 输入法状态条 -->
  <div class="imebar d-flex align-items-center">
    <div class="sgbadge">S</div>
    <span class="yi">英</span>
    <svg width="12" height="14" viewBox="0 0 12 14"><path d="M1 3q2 0 2 2M8 5q2 4-1 7" fill="none" stroke="#1670c4" stroke-width="2"/></svg>
    <svg width="12" height="18" viewBox="0 0 12 18"><rect x="3" y="1" width="6" height="10" rx="3" fill="#1670c4"/><path d="M1 8a5 5 0 0 0 10 0M6 13v4M3 17h6" fill="none" stroke="#1670c4" stroke-width="1.500"/></svg>
    <svg width="16" height="14" viewBox="0 0 16 14"><rect x="1" y="2" width="14" height="10" rx="1" fill="none" stroke="#1670c4" stroke-width="1.600"/><path d="M3 5h10M3 7.500h10M5 10h6" stroke="#1670c4" stroke-dasharray="2 1"/></svg>
    <svg width="14" height="16" viewBox="0 0 14 16"><circle cx="7" cy="4" r="3.500" fill="#b5c6d8"/><path d="M1 14q0-6 6-6t6 6z" fill="#b5c6d8"/></svg>
    <svg width="15" height="14" viewBox="0 0 15 14"><path d="M4 1l3 1 3-1 5 3-2 3-2-1v8H4V6L2 7 0 4z" fill="#1670c4"/></svg>
    <svg width="15" height="16" viewBox="0 0 15 16"><path d="M2 14L9 7a4 4 0 0 1 4-5l-2 2 1 2 2-2a4 4 0 0 1-5 4l-5 6z" fill="#1670c4" stroke="#1670c4"/></svg>
  </div>

  <!-- 红色圈注 -->
  <svg class="ellipse" width="352" height="58" viewBox="0 0 352 58">
    <ellipse cx="176" cy="29" rx="172" ry="19" fill="none" stroke="#f00" stroke-width="3"/>
    <path d="M4 2l13 6-13 4 3-5z" fill="#22e000"/>
  </svg>
</div>

<script src="https://cdn.jsdelivr.net/npm/bootstrap@5.3.2/dist/js/bootstrap.bundle.min.js"></script>
</body>
</html>
